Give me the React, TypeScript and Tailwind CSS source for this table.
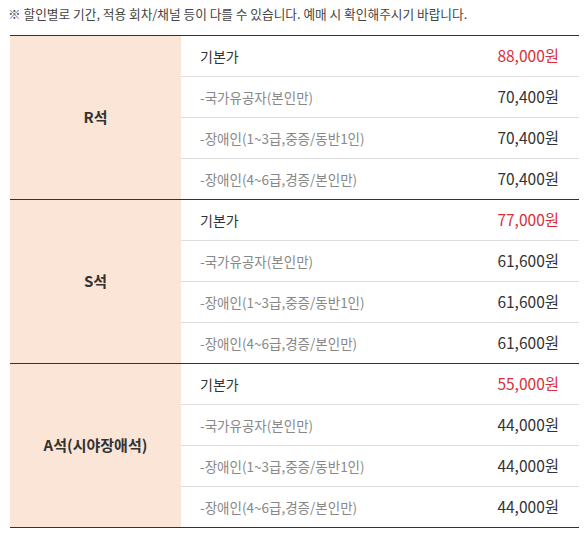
import React from "react"

const groups = [
  { seat: "R석", base: "88,000원", sub: ["70,400원", "70,400원", "70,400원"] },
  { seat: "S석", base: "77,000원", sub: ["61,600원", "61,600원", "61,600원"] },
  { seat: "A석(시야장애석)", base: "55,000원", sub: ["44,000원", "44,000원", "44,000원"] },
]

const subLabels = [
  "-국가유공자(본인만)",
  "-장애인(1~3급,중증/동반1인)",
  "-장애인(4~6급,경증/본인만)",
]

export default function App() {
  return (
    <div
      className="w-[587px] h-[537px] bg-white pt-[5px]"
      style={{ fontFamily: '"Noto Sans CJK KR", "Noto Sans", sans-serif' }}
    >
      {/* notice */}
      <p className="pl-[8px] text-[12.7px] leading-[18px] text-[#444]">
        ※ 할인별로 기간, 적용 회차/채널 등이 다를 수 있습니다. 예매 시 확인해주시기 바랍니다.
      </p>

      {/* price table */}
      <div className="mx-[10px] mt-[12px] w-[569px] border-t border-[#333]">
        {groups.map((g) => (
          <div key={g.seat} className="flex border-b border-[#333]">
            <div className="w-[171px] shrink-0 bg-[#fbe5d6] flex items-center justify-center text-[15px] font-bold text-[#333]">
              {g.seat}
            </div>
            <div className="flex-1">
              <div className="h-[41px] flex items-center justify-between pl-[19px] pr-[20px] border-b border-[#ddd]">
                <span className="text-[14px] text-[#333]">기본가</span>
                <span className="text-[15.5px] text-[#d92f3b]">{g.base}</span>
              </div>
              {g.sub.map((price, i) => (
                <div
                  key={i}
                  className={`flex items-center justify-between pl-[19px] pr-[20px] ${
                    i < 2 ? "h-[41px] border-b border-[#ddd]" : "h-[40px]"
                  }`}
                >
                  <span className="text-[13.5px] text-[#888]">{subLabels[i]}</span>
                  <span className="text-[15.5px] text-[#333]">{price}</span>
                </div>
              ))}
            </div>
          </div>
        ))}
      </div>
    </div>
  )
}
